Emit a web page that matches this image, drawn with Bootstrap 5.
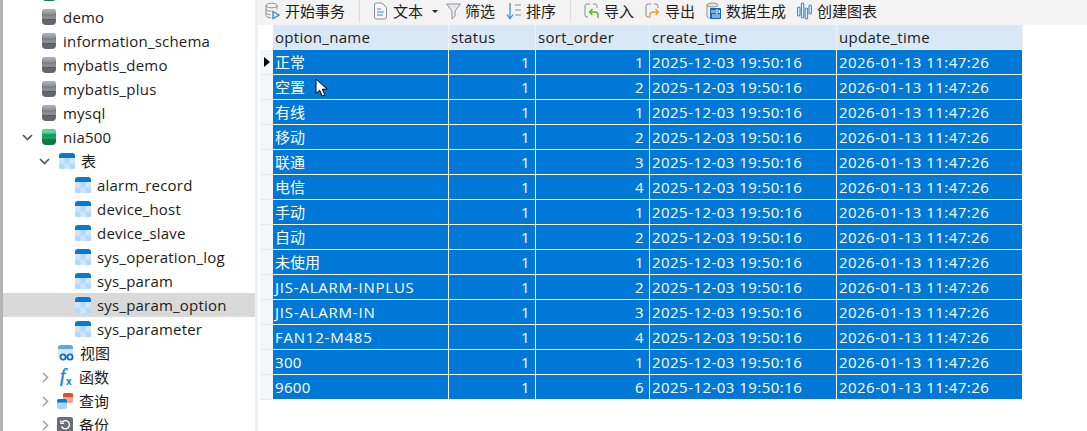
<!DOCTYPE html>
<html lang="zh">

<head>
    <meta charset="UTF-8">
    <meta name="viewport" content="width=device-width, initial-scale=1">
    <title>sys_param_option</title>
    <link href="https://cdn.jsdelivr.net/npm/bootstrap@5.3.3/dist/css/bootstrap.min.css" rel="stylesheet">
    <style>
        body { font-family: "Open Sans", "Noto Sans CJK SC", sans-serif; font-size: 15px; color: #1c1c1c; background: #fff; overflow: hidden; }
        .app-shell { height: 431px; overflow: hidden; }
        .tree-pane { width: 258px; flex: none; overflow: hidden; border-left: 3px solid #b4b4b4; border-right: 3px solid #f0f0f0; }
        .tree-list { margin-top: -19px; }
        .tree-row { height: 24px; white-space: nowrap; letter-spacing: .2px; }
        .tree-row.is-active { background: #d9d9d9; }
        .tree-toggle { width: 11px; height: 7px; flex: none; }
        .tree-toggle.shut { width: 7px; height: 11px; margin-left: 2px; margin-right: 2px; }
        .lvl-db { padding-left: 19px; }
        .lvl-db .tree-toggle, .lvl-group .tree-toggle { margin-right: 9px; }
        .lvl-db .tree-spacer { width: 20px; flex: none; }
        .lvl-db .tree-ico { margin-right: 7px; width: 14px; height: 16px; }
        .lvl-group { padding-left: 36px; letter-spacing: 0; }
        .lvl-group .tree-spacer { width: 19px; flex: none; }
        .lvl-group .tree-toggle.shut { margin-right: 8px; margin-left: 3px; }
        .lvl-group .tree-ico { margin-right: 6px; width: 16px; height: 16px; overflow: visible; }
        .lvl-table { padding-left: 72px; }
        .lvl-table .tree-ico { margin-right: 6px; width: 16px; height: 16px; }
        .tree-ico { flex: none; }
        .main-pane { min-width: 0; }
        .tool-strip { height: 25px; background: #f3f3f3; padding: 0 0 3px 7px; gap: 11px; white-space: nowrap; }
        .tool-item { gap: 5px; line-height: 1; }
        .tool-item svg { width: 15px; height: 18px; flex: none; }
        .tool-tight { gap: 4px; }
        .tool-sep { width: 1px; height: 22px; background: #dcdcdc; margin: 0 2px 0 3px; }
        .tool-caret { width: 0; height: 0; border-left: 3px solid transparent; border-right: 3px solid transparent; border-top: 3px solid #222; margin: 0 -3px 0 -2px; }
        .data-grid { table-layout: fixed; width: 763px; margin-left: 2px; border-collapse: separate; border-spacing: 0; line-height: 1; letter-spacing: .3px; }
        .data-grid th, .data-grid td { height: 25px; padding: 0 5px 0 2px; font-weight: 400; white-space: nowrap; overflow: hidden; }
        .data-grid thead th { background: #d8e8f7; border-right: 1px solid #eef3f8; border-bottom: 1px solid #eef3f8; }
        .data-grid thead th.grid-corner { background: #fff; border: 0; }
        .data-grid tbody th { background: #f4f6f9; border-bottom: 1px solid #e4e8ee; padding: 0; }
        .data-grid tbody td { background: #0078d7; color: #fff; border-right: 1px solid #fff; border-bottom: 1px solid #fff; }
        .data-grid tbody td.name-cjk { letter-spacing: 0; }
        .data-grid tbody td.name-caps { letter-spacing: .78px; }
        .data-grid tbody td.cell-time { letter-spacing: .46px; }
        .c-mark { width: 13px; }
        .c-name { width: 176px; }
        .c-status { width: 87px; }
        .c-sort { width: 114px; }
        .c-create { width: 187px; }
        .c-update { width: 186px; }
        .row-mark { display: block; width: 0; height: 0; margin-left: 4px; border-top: 5px solid transparent; border-bottom: 5px solid transparent; border-left: 6px solid #000; }
        .mouse-arrow { position: absolute; left: 315px; top: 78px; width: 13px; height: 19px; }
    </style>
</head>

<body>
    <svg width="0" height="0" class="position-absolute">
        <defs>
            <linearGradient id="gray-top" x1="0" y1="0" x2="0" y2="1"><stop offset="0" stop-color="#b0b3b7"/><stop offset="1" stop-color="#8a8e93"/></linearGradient>
            <symbol id="i-db-gray" viewBox="0 0 14 16">
                <rect y="0" width="14" height="16" rx="4" fill="#63686e"/>
                <rect y="0" width="14" height="6" rx="3" fill="url(#gray-top)"/>
                <rect y="6" width="14" height="4" fill="#8a8e93"/>
                <rect y="5.5" width="14" height="1" fill="#74787e"/>
                <rect y="10" width="14" height="1" fill="#585c62"/>
            </symbol>
            <symbol id="i-db-green" viewBox="0 0 14 16">
                <rect y="0" width="14" height="16" rx="4" fill="#0b7a44"/>
                <rect y="0" width="14" height="5" rx="3" fill="#57d59a"/>
                <rect y="4" width="14" height="1" fill="#2fbd7a"/>
                <rect y="5" width="14" height="5" fill="#16a05c"/>
            </symbol>
            <symbol id="i-tbl" viewBox="0 0 16 16">
                <rect width="16" height="16" rx="3" fill="#cfe6fc"/>
                <rect x="5.5" y="5" width="5" height="5.5" fill="#b5d9fb"/>
                <rect x="0" y="10.5" width="5.5" height="5.5" rx="1" fill="#b5d9fb"/>
                <rect x="10.5" y="10.5" width="5.5" height="5.5" rx="1" fill="#b5d9fb"/>
                <path d="M0 5V3a3 3 0 0 1 3-3h10a3 3 0 0 1 3 3v2z" fill="#0a78d2"/>
            </symbol>
            <symbol id="i-view" viewBox="0 0 16 16">
                <rect width="15" height="13" rx="3" fill="#cfe6fc"/>
                <path d="M0 4V3a3 3 0 0 1 3-3h9a3 3 0 0 1 3 3v1z" fill="#5aa9e6"/>
                <circle cx="5" cy="12" r="2.6" fill="#fff" stroke="#0a6fc2" stroke-width="1.8"/>
                <circle cx="12" cy="12" r="2.6" fill="#fff" stroke="#0a6fc2" stroke-width="1.8"/>
                <rect x="7" y="11" width="3" height="1.6" fill="#0a6fc2"/>
            </symbol>
            <symbol id="i-query" viewBox="0 0 16 16">
                <rect x="6" y="0" width="10" height="10" rx="2" fill="#f7a58c"/>
                <path d="M6 4V2a2 2 0 0 1 2-2h6a2 2 0 0 1 2 2v2z" fill="#dd4f2b"/>
                <rect x="0" y="6" width="10" height="10" rx="2" fill="#a9d4fa"/>
                <path d="M0 9.5V8a2 2 0 0 1 2-2h6a2 2 0 0 1 2 2v1.5z" fill="#0a78d2"/>
            </symbol>
            <symbol id="i-backup" viewBox="0 0 14 14">
                <rect width="14" height="14" rx="2" fill="#6a6f75"/>
                <path d="M4.4 4.6a3.6 3.6 0 1 1-.4 3.6" fill="none" stroke="#fff" stroke-width="1.2"/>
                <path d="M3.4 2.8v2.8h2.8" fill="none" stroke="#fff" stroke-width="1.1"/>
            </symbol>
            <symbol id="i-down" viewBox="0 0 11 7"><path d="M1 1l4.5 4.5L10 1" fill="none" stroke="#555" stroke-width="1.7"/></symbol>
            <symbol id="i-right" viewBox="0 0 7 11"><path d="M1 1l4.5 4.5L1 10" fill="none" stroke="#a6a6a6" stroke-width="1.7"/></symbol>
            <symbol id="i-begin" viewBox="0 0 15 18">
                <ellipse cx="6.5" cy="3.5" rx="5.5" ry="2.3" fill="none" stroke="#8c8c8c"/>
                <path d="M1 3.5v10c0 1.3 2.5 2.3 5 2.3M12 3.5v4M1 7c0 1.3 2.5 2.3 5.5 2.3M1 10.5c0 1.3 2 2.2 4.5 2.2" fill="none" stroke="#8c8c8c"/>
                <path d="M8 9.5l6 3.5-6 3.5z" fill="none" stroke="#2a8fdc" stroke-width="1.4"/>
            </symbol>
            <symbol id="i-doc" viewBox="0 0 15 18">
                <path d="M1.5 3a2 2 0 0 1 2-2h5.500l4.500 4.500V15a2 2 0 0 1-2 2h-8a2 2 0 0 1-2-2z" fill="#f8f8f8" stroke="#8c8c8c"/>
                <path d="M4 7h4M4 10h7M4 13h6" stroke="#2a8fdc" stroke-width="1.2"/>
            </symbol>
            <symbol id="i-filter" viewBox="0 0 15 18">
                <path d="M.7 2h13.600L9 9v5l-3 3V9z" fill="none" stroke="#8c8c8c"/>
                <path d="M2.5 3.500h10L9.500 7h-4z" fill="#d9e9f7"/>
            </symbol>
            <symbol id="i-sort" viewBox="0 0 15 18">
                <path d="M4 1v15M.8 12.500L4 16.500l3.200-4" fill="none" stroke="#2a8fdc" stroke-width="1.2"/>
                <path d="M9 3h6M9 8h6M9 13h6" stroke="#8c8c8c"/>
            </symbol>
            <symbol id="i-import" viewBox="0 0 15 18">
                <path d="M6 2H3a2 2 0 0 0-2 2v9a2 2 0 0 0 2 2h1M9 2h2a2 2 0 0 1 2 2v2" fill="none" stroke="#8c8c8c"/>
                <path d="M14 16v-3a3 3 0 0 0-3-3H6M8.500 7L5.500 10l3 3" fill="none" stroke="#58b81e" stroke-width="1.4"/>
            </symbol>
            <symbol id="i-export" viewBox="0 0 15 18">
                <path d="M6 2H3a2 2 0 0 0-2 2v9a2 2 0 0 0 2 2h1M9 2h2a2 2 0 0 1 2 2v2" fill="none" stroke="#8c8c8c"/>
                <path d="M5 16v-3a3 3 0 0 1 3-3h5M10.500 7l3 3-3 3" fill="none" stroke="#f0a02c" stroke-width="1.4"/>
            </symbol>
            <symbol id="i-gen" viewBox="0 0 15 18">
                <ellipse cx="6.5" cy="3" rx="5.5" ry="2" fill="#e3e3e3" stroke="#8c8c8c"/>
                <path d="M1 3v11c0 1.200 2 2 3 2" fill="none" stroke="#8c8c8c"/>
                <rect x="4" y="6" width="11" height="11" rx="1" fill="#0f6cbd"/>
                <path d="M6 8v3M8 8v3M10 8h2v3h-2zM13.500 8v3M6 13h8M6 15h8" stroke="#fff" stroke-width=".9" fill="none"/>
            </symbol>
            <symbol id="i-chart" viewBox="0 0 15 18">
                <g fill="none" stroke="#2a8fdc" stroke-width="1.1">
                    <rect x=".6" y="5" width="2.4" height="9" rx="1.2"/>
                    <rect x="4.4" y="1" width="2.4" height="15" rx="1.2"/>
                    <rect x="8.2" y="6" width="2.4" height="11" rx="1.2"/>
                    <rect x="12" y="3" width="2.4" height="9" rx="1.2"/>
                </g>
            </symbol>
        </defs>
    </svg>

    <div class="app-shell d-flex position-relative">
        <aside class="tree-pane">
            <div class="tree-list" id="tree"></div>
        </aside>

        <main class="main-pane flex-fill">
            <div class="tool-strip d-flex align-items-center">
                <span class="tool-item d-flex align-items-center"><svg><use href="#i-begin"/></svg>开始事务</span>
                <span class="tool-sep"></span>
                <span class="tool-item d-flex align-items-center"><svg><use href="#i-doc"/></svg>文本</span>
                <span class="tool-caret"></span>
                <span class="tool-item tool-tight d-flex align-items-center"><svg><use href="#i-filter"/></svg>筛选</span>
                <span class="tool-item d-flex align-items-center"><svg><use href="#i-sort"/></svg>排序</span>
                <span class="tool-sep"></span>
                <span class="tool-item d-flex align-items-center"><svg><use href="#i-import"/></svg>导入</span>
                <span class="tool-item d-flex align-items-center"><svg><use href="#i-export"/></svg>导出</span>
                <span class="tool-item d-flex align-items-center"><svg><use href="#i-gen"/></svg>数据生成</span>
                <span class="tool-item d-flex align-items-center"><svg><use href="#i-chart"/></svg>创建图表</span>
            </div>

            <table class="data-grid">
                <colgroup>
                    <col class="c-mark"><col class="c-name"><col class="c-status"><col class="c-sort"><col class="c-create"><col class="c-update">
                </colgroup>
                <thead>
                    <tr>
                        <th class="grid-corner"></th>
                        <th>option_name</th>
                        <th>status</th>
                        <th>sort_order</th>
                        <th>create_time</th>
                        <th>update_time</th>
                    </tr>
                </thead>
                <tbody id="rows"></tbody>
            </table>
        </main>

        <svg class="mouse-arrow" viewBox="0 0 13 19">
            <path d="M1 1v14.500l3.600-3.300 2.600 5.800 2.700-1.200-2.600-5.600h4.900z" fill="#fff" stroke="#000"/>
        </svg>
    </div>

    <script src="https://cdn.jsdelivr.net/npm/bootstrap@5.3.3/dist/js/bootstrap.bundle.min.js"></script>
    <script>
        // arbol de la izquierda
        const tree = [
            ["db", "i-db-green", "", ""],
            ["db", "i-db-gray", "demo", ""],
            ["db", "i-db-gray", "information_schema", ""],
            ["db", "i-db-gray", "mybatis_demo", ""],
            ["db", "i-db-gray", "mybatis_plus", ""],
            ["db", "i-db-gray", "mysql", ""],
            ["db", "i-db-green", "nia500", "down"],
            ["group", "i-tbl", "表", "down"],
            ["table", "i-tbl", "alarm_record", ""],
            ["table", "i-tbl", "device_host", ""],
            ["table", "i-tbl", "device_slave", ""],
            ["table", "i-tbl", "sys_operation_log", ""],
            ["table", "i-tbl", "sys_param", ""],
            ["table", "i-tbl", "sys_param_option", "", true],
            ["table", "i-tbl", "sys_parameter", ""],
            ["group", "i-view", "视图", ""],
            ["group", "i-fx", "函数", "right"],
            ["group", "i-query", "查询", "right"],
            ["group", "i-backup", "备份", "right"]
        ];

        const treeBox = document.getElementById("tree");
        tree.forEach(([level, icon, label, toggle, active]) => {
            let head = `<span class="tree-spacer"></span>`;
            if (toggle === "down") head = `<svg class="tree-toggle"><use href="#i-down"/></svg>`;
            if (toggle === "right") head = `<svg class="tree-toggle shut"><use href="#i-right"/></svg>`;
            if (level === "table") head = "";

            let ico = `<svg class="tree-ico"><use href="#${icon}"/></svg>`;
            if (icon === "i-fx") {
                ico = `<svg class="tree-ico" viewBox="0 0 16 16"><text x="3" y="13" font-family="Liberation Serif" font-style="italic" font-size="19" stroke="#1583d8" stroke-width=".5" fill="#1583d8">f</text><text x="9" y="15.5" font-family="Liberation Sans" font-weight="700" font-size="10" fill="#0a6fc2">x</text></svg>`;
            }

            const row = document.createElement("div");
            row.className = `tree-row d-flex align-items-center lvl-${level}${active ? " is-active" : ""}`;
            row.innerHTML = `${head}${ico}<span>${label}</span>`;
            treeBox.appendChild(row);
        });

        // filas de la tabla
        const rows = [
            ["正常", 1, "name-cjk"], ["空置", 2, "name-cjk"], ["有线", 1, "name-cjk"], ["移动", 2, "name-cjk"],
            ["联通", 3, "name-cjk"], ["电信", 4, "name-cjk"], ["手动", 1, "name-cjk"], ["自动", 2, "name-cjk"],
            ["未使用", 1, "name-cjk"], ["JIS-ALARM-INPLUS", 2, "name-caps"], ["JIS-ALARM-IN", 3, "name-caps"],
            ["FAN12-M485", 4, "name-caps"], ["300", 1, ""], ["9600", 6, ""]
        ];

        const body = document.getElementById("rows");
        rows.forEach(([name, order, nameClass], i) => {
            const tr = document.createElement("tr");
            tr.innerHTML = `
                <th>${i === 0 ? '<span class="row-mark"></span>' : ""}</th>
                <td class="${nameClass}">${name}</td>
                <td class="text-end">1</td>
                <td class="text-end">${order}</td>
                <td class="cell-time">2025-12-03 19:50:16</td>
                <td class="cell-time">2026-01-13 11:47:26</td>`;
            body.appendChild(tr);
        });
    </script>
</body>
</html>
